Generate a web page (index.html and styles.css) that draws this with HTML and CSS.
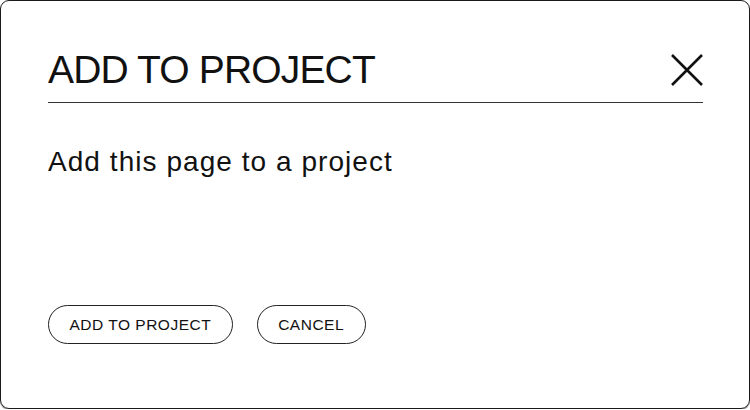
FILE: index.html
```html
<!DOCTYPE html>
<html>
<head>
<meta charset="utf-8">
<link rel="stylesheet" href="styles.css">
</head>
<body>
<div class="dialog">
  <div class="header">
    <h1 class="title">ADD TO PROJECT</h1>
    <button class="close" aria-label="Close">
      <svg width="34" height="34" viewBox="0 0 34 34"><path d="M2 2 L32 32 M32 2 L2 32" stroke="#111" stroke-width="2.6" fill="none"/></svg>
    </button>
  </div>
  <p class="text">Add this page to a project</p>
  <div class="actions">
    <button class="btn">ADD TO PROJECT</button>
    <button class="btn">CANCEL</button>
  </div>
</div>
</body>
</html>
```
FILE: styles.css
```css
html, body { margin: 0; padding: 0; background: #fff; }
body { font-family: "Liberation Sans", Arial, sans-serif; color: #111; }
.dialog {
  box-sizing: border-box;
  width: 750px;
  height: 409px;
  border: 1px solid #1a1a1a;
  border-radius: 9px;
  box-shadow: 0 1px 1px rgba(0,0,0,0.45);
  padding: 0 46px 0 47px;
  display: flex;
  flex-direction: column;
}
.header {
  display: flex;
  align-items: center;
  justify-content: space-between;
  border-bottom: 1px solid #333;
  height: 102px;
  box-sizing: border-box;
}
.title {
  margin: 0;
  padding-top: 36px;
  font-weight: 400;
  font-size: 39px;
  line-height: 60px;
  letter-spacing: -0.85px;
}
.close {
  border: 0; background: none; padding: 0; margin-top: 36px; margin-right: -1px;
  width: 34px; height: 34px; cursor: pointer;
}
.close svg { display: block; }
.text {
  margin: 43px 0 0;
  font-size: 28px;
  line-height: 32px;
  letter-spacing: 1.05px;
}
.actions {
  display: flex;
  gap: 24px;
  margin-top: 127px;
}
.btn {
  font-family: "Liberation Sans", Arial, sans-serif;
  font-size: 15.5px;
  letter-spacing: 0.5px;
  color: #111;
  background: #fff;
  border: 1px solid #222;
  border-radius: 20px;
  height: 39px;
  padding: 0 20.5px;
  cursor: pointer;
}
```
